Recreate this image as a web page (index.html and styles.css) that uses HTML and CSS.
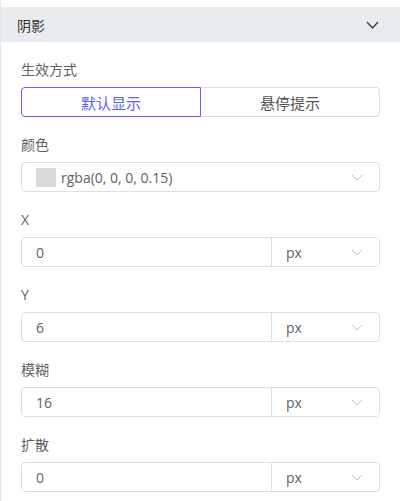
FILE: index.html
```html
<!DOCTYPE html>
<html lang="zh">
<head>
<meta charset="utf-8">
<link rel="stylesheet" href="styles.css">
</head>
<body>
<div class="panel">
  <div class="header">
    <span class="title">阴影</span>
    <svg class="hchev" width="13" height="8" viewBox="0 0 13 8"><path d="M1 1 L6.5 7 L12 1" fill="none" stroke="#333" stroke-width="1.2"/></svg>
  </div>
  <div class="body">
    <div class="group">
      <div class="label">生效方式</div>
      <div class="seg">
        <div class="seg-item active">默认显示</div>
        <div class="seg-item">悬停提示</div>
      </div>
    </div>
    <div class="group">
      <div class="label">颜色</div>
      <div class="select">
        <span class="swatch"></span>
        <span class="val">rgba(0, 0, 0, 0.15)</span>
        <svg class="chev" width="12" height="7" viewBox="0 0 12 7"><path d="M1 1 L6 6 L11 1" fill="none" stroke="#c0c4cc" stroke-width="1"/></svg>
      </div>
    </div>
    <div class="group">
      <div class="label">X</div>
      <div class="unit-input">
        <div class="num">0</div>
        <div class="unit"><span>px</span><svg class="chev" width="12" height="7" viewBox="0 0 12 7"><path d="M1 1 L6 6 L11 1" fill="none" stroke="#c0c4cc" stroke-width="1"/></svg></div>
      </div>
    </div>
    <div class="group">
      <div class="label">Y</div>
      <div class="unit-input">
        <div class="num">6</div>
        <div class="unit"><span>px</span><svg class="chev" width="12" height="7" viewBox="0 0 12 7"><path d="M1 1 L6 6 L11 1" fill="none" stroke="#c0c4cc" stroke-width="1"/></svg></div>
      </div>
    </div>
    <div class="group">
      <div class="label">模糊</div>
      <div class="unit-input">
        <div class="num">16</div>
        <div class="unit"><span>px</span><svg class="chev" width="12" height="7" viewBox="0 0 12 7"><path d="M1 1 L6 6 L11 1" fill="none" stroke="#c0c4cc" stroke-width="1"/></svg></div>
      </div>
    </div>
    <div class="group">
      <div class="label">扩散</div>
      <div class="unit-input">
        <div class="num">0</div>
        <div class="unit"><span>px</span><svg class="chev" width="12" height="7" viewBox="0 0 12 7"><path d="M1 1 L6 6 L11 1" fill="none" stroke="#c0c4cc" stroke-width="1"/></svg></div>
      </div>
    </div>
  </div>
</div>
</body>
</html>
```

FILE: styles.css
```css
html, body {
  margin: 0;
  padding: 0;
  background: #fff;
}
body {
  font-family: "Open Sans", "Noto Sans CJK SC", sans-serif;
  font-size: 14px;
  color: #606266;
}
.panel {
  width: 400px;
  height: 501px;
  border-left: 1px solid #e4e6ea;
  padding-top: 7px;
  box-sizing: border-box;
  overflow: hidden;
}
.header {
  height: 35px;
  background: #e9ecef;
  display: flex;
  align-items: center;
  justify-content: space-between;
  padding: 0 21px 0 16px;
}
.title {
  color: #333;
  font-size: 14px;
}
.hchev { display: block; }
.body {
  padding: 0 20px;
}
.group {
  margin-top: 17px;
}
.label {
  height: 22px;
  line-height: 22px;
  margin-bottom: 6px;
  color: #606266;
}
.seg {
  display: flex;
  height: 30px;
  box-sizing: border-box;
}
.seg-item {
  flex: 1;
  display: flex;
  align-items: center;
  justify-content: center;
  border: 1px solid #dcdfe6;
  color: #555;
  font-size: 15px;
}
.seg-item:first-child {
  border-radius: 4px 0 0 4px;
}
.seg-item:last-child {
  border-left: none;
  border-radius: 0 4px 4px 0;
}
.seg-item.active {
  border-color: #5b63f5;
  color: #5b63f5;
}
.select, .unit-input {
  height: 30px;
  box-sizing: border-box;
  border: 1px solid #dcdfe6;
  border-radius: 4px;
  display: flex;
  align-items: center;
}
.select {
  padding: 0 16px 0 14px;
}
.swatch {
  width: 20px;
  height: 19px;
  background: #d9d9d9;
  margin-right: 5px;
}
.val {
  flex: 1;
}
.chev { display: block; }
.num {
  width: 250px;
  height: 100%;
  box-sizing: border-box;
  border-right: 1px solid #dcdfe6;
  padding-left: 14px;
  display: flex;
  align-items: center;
}
.unit {
  flex: 1;
  display: flex;
  align-items: center;
  justify-content: space-between;
  padding: 0 16px 0 14px;
}
```
